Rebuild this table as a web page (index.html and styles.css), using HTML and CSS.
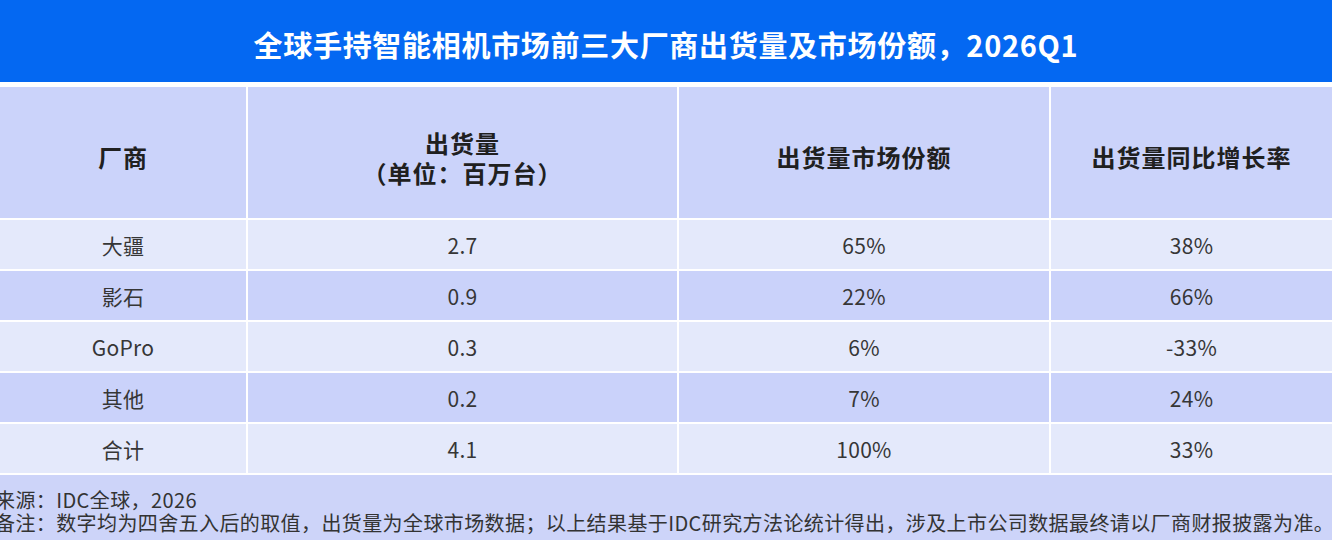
FILE: index.html
```html
<!DOCTYPE html>
<html lang="zh-CN">
<head>
<meta charset="utf-8">
<title>全球手持智能相机市场前三大厂商出货量及市场份额，2026Q1</title>
<link rel="stylesheet" href="styles.css">
</head>
<body>
<div class="page">
  <header class="title-bar">
    <h1 class="title">全球手持智能相机市场前三大厂商出货量及市场份额，2026Q1</h1>
  </header>
  <div class="table">
    <div class="cell head">厂商</div>
    <div class="cell head two-line"><span>出货量</span><span>（单位：百万台）</span></div>
    <div class="cell head">出货量市场份额</div>
    <div class="cell head">出货量同比增长率</div>

    <div class="cell light">大疆</div>
    <div class="cell light">2.7</div>
    <div class="cell light">65%</div>
    <div class="cell light">38%</div>

    <div class="cell dark">影石</div>
    <div class="cell dark">0.9</div>
    <div class="cell dark">22%</div>
    <div class="cell dark">66%</div>

    <div class="cell light">GoPro</div>
    <div class="cell light">0.3</div>
    <div class="cell light">6%</div>
    <div class="cell light">-33%</div>

    <div class="cell dark">其他</div>
    <div class="cell dark">0.2</div>
    <div class="cell dark">7%</div>
    <div class="cell dark">24%</div>

    <div class="cell light">合计</div>
    <div class="cell light">4.1</div>
    <div class="cell light">100%</div>
    <div class="cell light">33%</div>
  </div>
  <footer class="notes">
    <p class="note">来源：IDC全球，2026</p>
    <p class="note">备注：数字均为四舍五入后的取值，出货量为全球市场数据；以上结果基于IDC研究方法论统计得出，涉及上市公司数据最终请以厂商财报披露为准。</p>
  </footer>
</div>
</body>
</html>
```
FILE: styles.css
```css
* {
  box-sizing: border-box;
}

html, body {
  margin: 0;
  padding: 0;
  background: #ffffff;
}

body {
  width: 1332px;
  height: 540px;
  overflow: hidden;
  font-family: "Noto Sans CJK SC", "Noto Sans", sans-serif;
}

.page {
  display: flex;
  flex-direction: column;
  height: 540px;
}

.title-bar {
  height: 82px;
  background: #0468f2;
  display: flex;
  align-items: center;
  justify-content: center;
  padding-top: 5px;
  margin-bottom: 5px;
}

.title {
  margin: 0;
  color: #ffffff;
  font-size: 29px;
  font-weight: 700;
  letter-spacing: 0.7px;
}

.table {
  display: grid;
  grid-template-columns: 246px 429px 370px 1fr;
  grid-template-rows: 131px;
  grid-auto-rows: 49px;
  gap: 2px;
  background: #ffffff;
  padding-bottom: 2px;
}

.cell {
  display: flex;
  align-items: center;
  justify-content: center;
  color: #363636;
  font-size: 21px;
  font-weight: 400;
  letter-spacing: 0.3px;
}

.head {
  background: #cbd3fa;
  color: #202020;
  font-size: 24px;
  font-weight: 700;
  letter-spacing: 1px;
  padding-top: 8px;
}

.two-line {
  flex-direction: column;
  line-height: 30px;
  padding-top: 10px;
}

.light {
  background: #e4e9fb;
}

.dark {
  background: #cad2fa;
}

.notes {
  flex: 1;
  background: #cdd4f9;
  padding-top: 13px;
  margin-left: -5px;
}

.note {
  margin: 0;
  color: #333333;
  font-size: 20px;
  line-height: 23px;
  letter-spacing: 0.4px;
  white-space: nowrap;
}
```
